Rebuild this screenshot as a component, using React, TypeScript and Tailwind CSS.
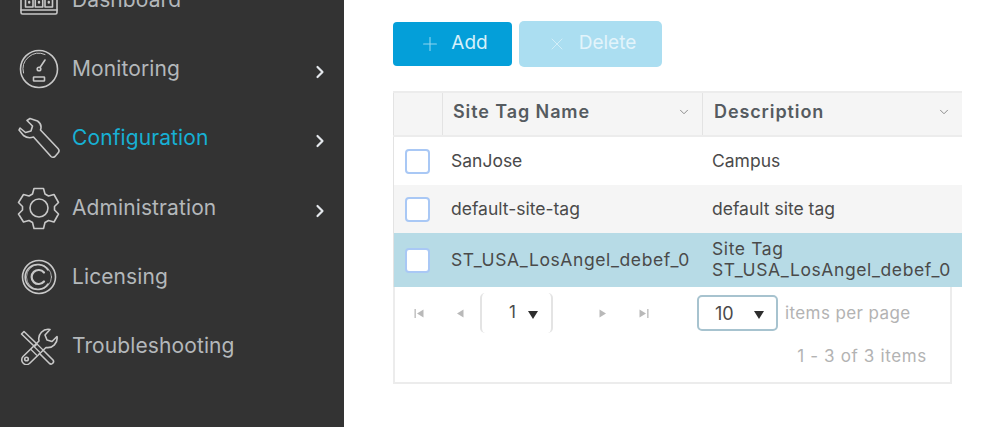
import { ChevronDown, ChevronRight, Plus, X } from 'lucide-react';
import type { ReactNode } from 'react';

const iconProps = {
  fill: 'none',
  stroke: 'currentColor',
  strokeWidth: 1.6,
  strokeLinecap: 'round' as const,
  strokeLinejoin: 'round' as const,
};

function DashboardIcon() {
  return (
    <svg width="42" height="42" viewBox="0 0 42 42" {...iconProps}>
      <rect x="3" y="3" width="36" height="32" rx="1.5" />
      <rect x="7.500" y="18" width="7.500" height="10" />
      <rect x="17.250" y="18" width="7.500" height="10" />
      <rect x="27" y="18" width="7.500" height="10" />
      <path d="M3 31h36" />
      <path d="M11.200 23v.5M21 23v.5M30.800 23v.5" strokeWidth="2.400" />
    </svg>
  );
}

function GaugeIcon() {
  return (
    <svg width="40" height="40" viewBox="0 0 40 40" {...iconProps}>
      <circle cx="20" cy="20" r="18.500" />
      <path d="M4.500 24A15.800 15.800 0 0 1 26 5.500" strokeWidth="1" />
      <circle cx="20" cy="20" r="1.800" />
      <path d="M21 18.500l5-7.500" />
      <rect x="14.500" y="28" width="11" height="4" rx="0.600" />
    </svg>
  );
}

function WrenchIcon() {
  return (
    <svg width="44" height="44" viewBox="0 0 44 44" {...iconProps}>
      <path d="M13 2.500l7.500 2.500c3 2 4.200 5.500 3 9l17.500 18.500c1.500 1.700 1.500 3 0 4.500l-3 3.500c-1.500 1-2.800 1-4 0l-17.500-19.500c-3.500 1.200-7 .8-10-1.500l-4.500-5.500 1-2 5.500 4.500 5.500-1.500 1.500-5-5.500-5.500z" />
    </svg>
  );
}

function GearIcon() {
  return (
    <svg width="44" height="44" viewBox="0 0 44 44" {...iconProps}>
      <path d="M17 2.500h9.500l1.500 5.500 3.500 2 5.500-1.500 4.500 8-4 4v3.500l4 4-4.500 8-5.500-1.500-3.500 2-1.500 6h-9.500l-1.500-6-3.500-2-5.500 1.500-5-8 4-4v-3.500l-4-4 5-8 5.500 1.500 3.500-2z" />
      <circle cx="22" cy="22" r="9" />
    </svg>
  );
}

function LicenseIcon() {
  return (
    <svg width="36" height="36" viewBox="0 0 36 36" {...iconProps}>
      <circle cx="18" cy="18" r="16.500" />
      <path d="M27 11a12.500 12.500 0 1 0 0 14" />
      <circle cx="18" cy="18" r="12.500" strokeWidth="0.800" />
      <path d="M23 13.500a7 7 0 1 0 0 9" strokeWidth="2.200" />
    </svg>
  );
}

function ToolsIcon() {
  return (
    <svg width="40" height="38" viewBox="0 0 40 38" {...iconProps}>
      {/* screwdriver */}
      <path d="M2.500 7L5 4.500 18 17l-2.500 2.500z" />
      <path d="M24 23l10 10a2.500 2.500 0 0 1-3.500 3.500l-10-10" />
      {/* wrench */}
      <path d="M31 2.500L26 8l2 5 5 1.500 5-5A9.500 9.500 0 0 1 27 20.500L11 36a4.500 4.500 0 0 1-7-6.500L20 14A9.500 9.500 0 0 1 31 2.500z" />
      <path d="M12 22.500l5.500 5.500M15 19.500l5.500 5.500M18 17l5.500 5.500" strokeWidth="1.200" />
      <circle cx="7.500" cy="32" r="1.800" />
    </svg>
  );
}

const navItems: { label: string; icon: ReactNode; active?: boolean; arrow?: boolean }[] = [
  { label: 'Dashboard', icon: <DashboardIcon /> },
  { label: 'Monitoring', icon: <GaugeIcon />, arrow: true },
  { label: 'Configuration', icon: <WrenchIcon />, active: true, arrow: true },
  { label: 'Administration', icon: <GearIcon />, arrow: true },
  { label: 'Licensing', icon: <LicenseIcon /> },
  { label: 'Troubleshooting', icon: <ToolsIcon /> },
];

const rows = [
  { name: 'SanJose', description: ['Campus'], className: 'h-12 bg-white' },
  { name: 'default-site-tag', description: ['default site tag'], className: 'h-12 bg-[#f5f5f5]' },
  {
    name: 'ST_USA_LosAngel_debef_0',
    description: ['Site Tag', 'ST_USA_LosAngel_debef_0'],
    className: 'h-[54px] bg-[#b7dbe6] tracking-[0.6px]',
  },
];

function Sidebar() {
  return (
    <aside className="flex w-[344px] shrink-0 flex-col overflow-hidden bg-[#333333] pt-[1px] text-[#b4b8bb]">
      <div className="-mt-[36px]">
        {navItems.map((item) => (
          <div key={item.label} className="flex h-[69.3px] items-center pl-[17px] pr-[14px]">
            <span className="flex w-[44px] shrink-0 justify-center text-[#c8c8c8]">{item.icon}</span>
            <span
              className={`ml-[11px] flex-1 text-[21px] tracking-[0.1px] ${
                item.active ? 'text-[#17b0d4]' : 'text-[#b4b8bb]'
              }`}
            >
              {item.label}
            </span>
            {item.arrow && <ChevronRight className="mt-[6px] h-5 w-5 text-[#e4e8ec]" strokeWidth={2.6} />}
          </div>
        ))}
      </div>
    </aside>
  );
}

function Toolbar() {
  return (
    <div className="flex items-center gap-[7px]">
      <button className="flex h-[44px] w-[119px] items-center justify-center gap-[10px] rounded-[4px] bg-[#049fd9] pb-[1px] pl-[2px] text-[19px] text-[#d6f0fa]">
        <Plus className="h-[22px] w-[22px] text-[#8fd5ef]" strokeWidth={1.2} />
        Add
      </button>
      <button className="flex h-[46px] w-[143px] items-center justify-center gap-[12px] rounded-[5px] bg-[#abdef1] pb-[1px] pl-[2px] text-[19px] text-[#e3f4fb]">
        <X className="h-[20px] w-[20px] text-[#d2eef8]" strokeWidth={1.2} />
        Delete
      </button>
    </div>
  );
}

function Triangle({ className = '' }: { className?: string }) {
  return (
    <svg width="10" height="9" viewBox="0 0 10 9" className={className}>
      <path d="M0 1h10L5 9z" fill="#2e2e2e" />
    </svg>
  );
}

function PageArrow({ dir, bar }: { dir: 'left' | 'right'; bar?: boolean }) {
  return (
    <svg width="11" height="11" viewBox="0 0 11 11" fill="#b9b9b9">
      {dir === 'left' ? <path d="M9.500 1.500v8L3 5.500z" /> : <path d="M1.500 1.500v8L8 5.500z" />}
      {bar && <rect x={dir === 'left' ? 0.5 : 9.2} y="1" width="1.300" height="9" />}
    </svg>
  );
}

function SiteTable() {
  return (
    <div className="mt-[24px] w-[569px] text-[#4a4a4a]">
      <div className="flex h-[46px] border-t-2 border-b-2 border-[#ececec] bg-[#f5f5f5] text-[18px] font-semibold tracking-[0.9px] text-[#555b60]">
        <div className="w-[49px] border-l border-[#e3e3e3]" />
        <div className="flex w-[260px] items-center justify-between border-l border-[#e3e3e3] pb-[5px] pl-[10px] pr-[11px]">
          Site Tag Name
          <ChevronDown className="h-[14px] w-[14px] text-[#7d7d7d]" strokeWidth={1.5} />
        </div>
        <div className="flex w-[260px] items-center justify-between border-l border-[#e3e3e3] pb-[5px] pl-[11px] pr-[11px]">
          Description
          <ChevronDown className="h-[14px] w-[14px] text-[#7d7d7d]" strokeWidth={1.5} />
        </div>
      </div>
      {rows.map((row) => (
        <div key={row.name} className={`flex items-center text-[17.5px] leading-[21px] ${row.className}`}>
          <div className="flex w-[49px] items-center justify-center self-stretch border-l border-[#e3e3e3] pr-[2px]">
            <span className="block h-[25px] w-[25px] rounded-[4px] border-2 border-[#a9c8f5] bg-white" />
          </div>
          <div className="w-[260px] pb-[2px] pl-[9px]">{row.name}</div>
          <div className="w-[260px] pb-[2px] pl-[10px]">
            {row.description.map((line) => (
              <div key={line} className="whitespace-nowrap">{line}</div>
            ))}
          </div>
        </div>
      ))}
      <div className="h-[97px] w-[559px] border-x-2 border-b-2 border-[#ececec] bg-white">
        <div className="flex items-start pt-[6px]">
          <div className="flex h-[40px] w-[85px] items-center justify-between pl-[19px] pr-[15px]">
            <PageArrow dir="left" bar />
            <PageArrow dir="left" />
          </div>
          <div className="flex h-[40px] w-[73px] items-center gap-[12px] rounded-[5px] border-x-2 border-[#e4e4e4] pl-[27px] text-[17px] text-[#4a4a4a]">
            1
            <Triangle className="mt-[3px]" />
          </div>
          <div className="flex h-[40px] w-[106px] items-center justify-between pl-[45px] pr-[10px]">
            <PageArrow dir="right" />
            <PageArrow dir="right" bar />
          </div>
          <div className="ml-[38px] mt-[2px] flex h-[36px] w-[81px] items-center justify-between rounded-[5px] border-2 border-[#a7c3cf] pl-[16px] pr-[12px] text-[18px] text-[#4a4a4a]">
            10
            <Triangle className="mt-[2px]" />
          </div>
          <span className="ml-[7px] mt-[8px] text-[17px] tracking-[0.4px] text-[#b3b3b3]">items per page</span>
        </div>
        <div className="mt-[11px] pr-[23px] text-right text-[17px] tracking-[0.65px] text-[#b3b3b3]">1 - 3 of 3 items</div>
      </div>
    </div>
  );
}

export default function App() {
  return (
    <div className="flex h-[427px] w-[999px] overflow-hidden bg-white font-['Inter',sans-serif]">
      <Sidebar />
      <main className="flex-1 pl-[49px] pt-[21px]">
        <Toolbar />
        <SiteTable />
      </main>
    </div>
  );
}
